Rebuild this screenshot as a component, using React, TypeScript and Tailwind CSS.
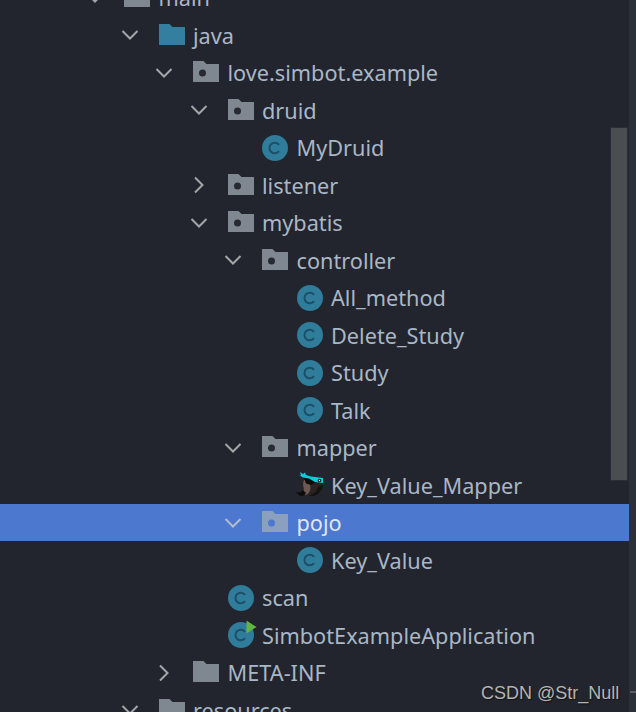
import React from 'react';

type Kind = 'folder' | 'source' | 'package' | 'class' | 'run' | 'mapper';

interface Node {
  name: string;
  depth: number;
  kind: Kind;
  open?: boolean;
  selected?: boolean;
}

const rows: Node[] = [
  { name: 'main', depth: -1, kind: 'folder', open: true },
  { name: 'java', depth: 0, kind: 'source', open: true },
  { name: 'love.simbot.example', depth: 1, kind: 'package', open: true },
  { name: 'druid', depth: 2, kind: 'package', open: true },
  { name: 'MyDruid', depth: 3, kind: 'class' },
  { name: 'listener', depth: 2, kind: 'package', open: false },
  { name: 'mybatis', depth: 2, kind: 'package', open: true },
  { name: 'controller', depth: 3, kind: 'package', open: true },
  { name: 'All_method', depth: 4, kind: 'class' },
  { name: 'Delete_Study', depth: 4, kind: 'class' },
  { name: 'Study', depth: 4, kind: 'class' },
  { name: 'Talk', depth: 4, kind: 'class' },
  { name: 'mapper', depth: 3, kind: 'package', open: true },
  { name: 'Key_Value_Mapper', depth: 4, kind: 'mapper' },
  { name: 'pojo', depth: 3, kind: 'package', open: true, selected: true },
  { name: 'Key_Value', depth: 4, kind: 'class' },
  { name: 'scan', depth: 2, kind: 'class' },
  { name: 'SimbotExampleApplication', depth: 2, kind: 'run' },
  { name: 'META-INF', depth: 1, kind: 'folder', open: false },
  { name: 'resources', depth: 0, kind: 'folder', open: true },
];

const Chevron: React.FC<{ open: boolean; selected?: boolean }> = ({ open, selected }) => (
  <svg width="24" height="24" viewBox="0 0 24 24" fill="none" stroke={selected ? '#b4bccb' : '#a4a7aa'} strokeWidth="2">
    {open ? <path d="M4.500 8l7.500 7.500L19.500 8" /> : <path d="M8 4.500l7.500 7.500L8 19.500" />}
  </svg>
);

const Folder: React.FC<{ color: string; dot?: string }> = ({ color, dot }) => (
  <svg width="26" height="21" viewBox="0 0 26 21" className="mt-[-2px]">
    <path d="M0 0h10.500l3 3H26v18H0z" fill={color} />
    {dot && <circle cx="9.500" cy="12" r="3.500" fill={dot} />}
  </svg>
);

const ClassIcon: React.FC<{ run?: boolean }> = ({ run }) => (
  <svg width="26" height="26" viewBox="0 0 26 26" className="overflow-visible">
    <circle cx="13" cy="13" r="13" fill="#2f7c9b" />
    <path d="M17 9.800a5.300 5.300 0 1 0 0 6.400" fill="none" stroke="#1d4f68" strokeWidth="2" />
    {run && <path d="M18.500 -1.500L28.500 5l-10 6.500z" fill="#62b543" />}
  </svg>
);

const MapperIcon: React.FC = () => (
  <svg width="27" height="26" viewBox="0 0 27 26" className="overflow-visible">
    <path d="M9 5h15l3 5c0 8-4 13-10 14-3 .5-6 .5-8-.5l-3-3 2-6c-1-4-1-7 1-9.500z" fill="#2b2321" />
    <path d="M17 24c5-1 9-5 10-11l-5 2c-1 4-4 7-9 9z" fill="#151211" />
    <path d="M8 8c-1.500 3-1 6 0 9-1 2-2 3-4 3l5 3c3 0 5-3 5.500-7l-1-8z" fill="#6d5853" />
    <path d="M0 20c2 1 5 .5 7-2l3 3c-1 2-3 3-4 3-2 0-5-2-6-4z" fill="#0d0b0a" />
    <path d="M8 6l7-1 5 5-5 3-5-1.500z" fill="#100c0b" />
    <path d="M4 0l3 2 2-1.500 1 2.500 5 1.500 12 1.500v5l-8-1-6-3.500-6-1-4-2.500 2 .5z" fill="#12c9dc" />
    <circle cx="23.500" cy="8.500" r="1.800" fill="#1c1c1c" />
    <circle cx="23.500" cy="8.500" r="0.700" fill="#e8e8e8" />
  </svg>
);

const NodeIcon: React.FC<{ node: Node }> = ({ node }) => {
  switch (node.kind) {
    case 'source':
      return <Folder color="#347f9f" />;
    case 'folder':
      return <Folder color="#7f8890" />;
    case 'package':
      return node.selected ? <Folder color="#8b9fbe" dot="#4c78cf" /> : <Folder color="#7f8890" dot="#272a31" />;
    case 'class':
      return <ClassIcon />;
    case 'run':
      return <ClassIcon run />;
    case 'mapper':
      return <MapperIcon />;
  }
};

const TreeRow: React.FC<{ node: Node }> = ({ node }) => (
  <div
    className={`flex h-[37.5px] shrink-0 items-center ${node.selected ? 'bg-[#4c78cf] text-[#dfe6f2]' : 'text-[#a9b7c6]'}`}
    style={{ paddingLeft: 117.5 + node.depth * 34.5 }}
  >
    <div className="flex w-[41px] shrink-0 items-center">
      {node.open !== undefined && <Chevron open={node.open} selected={node.selected} />}
    </div>
    <div className="flex w-[26px] shrink-0 items-center justify-center">
      <NodeIcon node={node} />
    </div>
    <span className="ml-[8.5px] mt-[2px] whitespace-nowrap">{node.name}</span>
  </div>
);

export default function App() {
  return (
    <div className="relative flex h-[712px] w-[636px] overflow-hidden bg-[#22252d] font-['Noto_Sans','Open_Sans',sans-serif] text-[21.7px]">
      <div className="mt-[-21.25px] flex min-w-0 flex-1 flex-col">
        {rows.map((node) => (
          <TreeRow key={node.name} node={node} />
        ))}
      </div>
      <div className="w-[7px] shrink-0 bg-[#2c3039]" />

      {/* scrollbar thumb */}
      <div className="absolute left-[610px] top-[127px] h-[354px] w-[18px] border border-[#2b2e35] bg-[#4b4e51]" />

      {/* watermark */}
      <span className="absolute left-[481px] top-[682px] font-['Liberation_Sans',sans-serif] text-[18px] leading-[22px] text-[#b4b4b4] [text-shadow:1px_1px_1px_#111]">
        CSDN @Str_Null
      </span>
      <div className="absolute left-[630px] top-[691px] h-[2px] w-[6px] bg-[#5a5d63]" />
    </div>
  );
}
